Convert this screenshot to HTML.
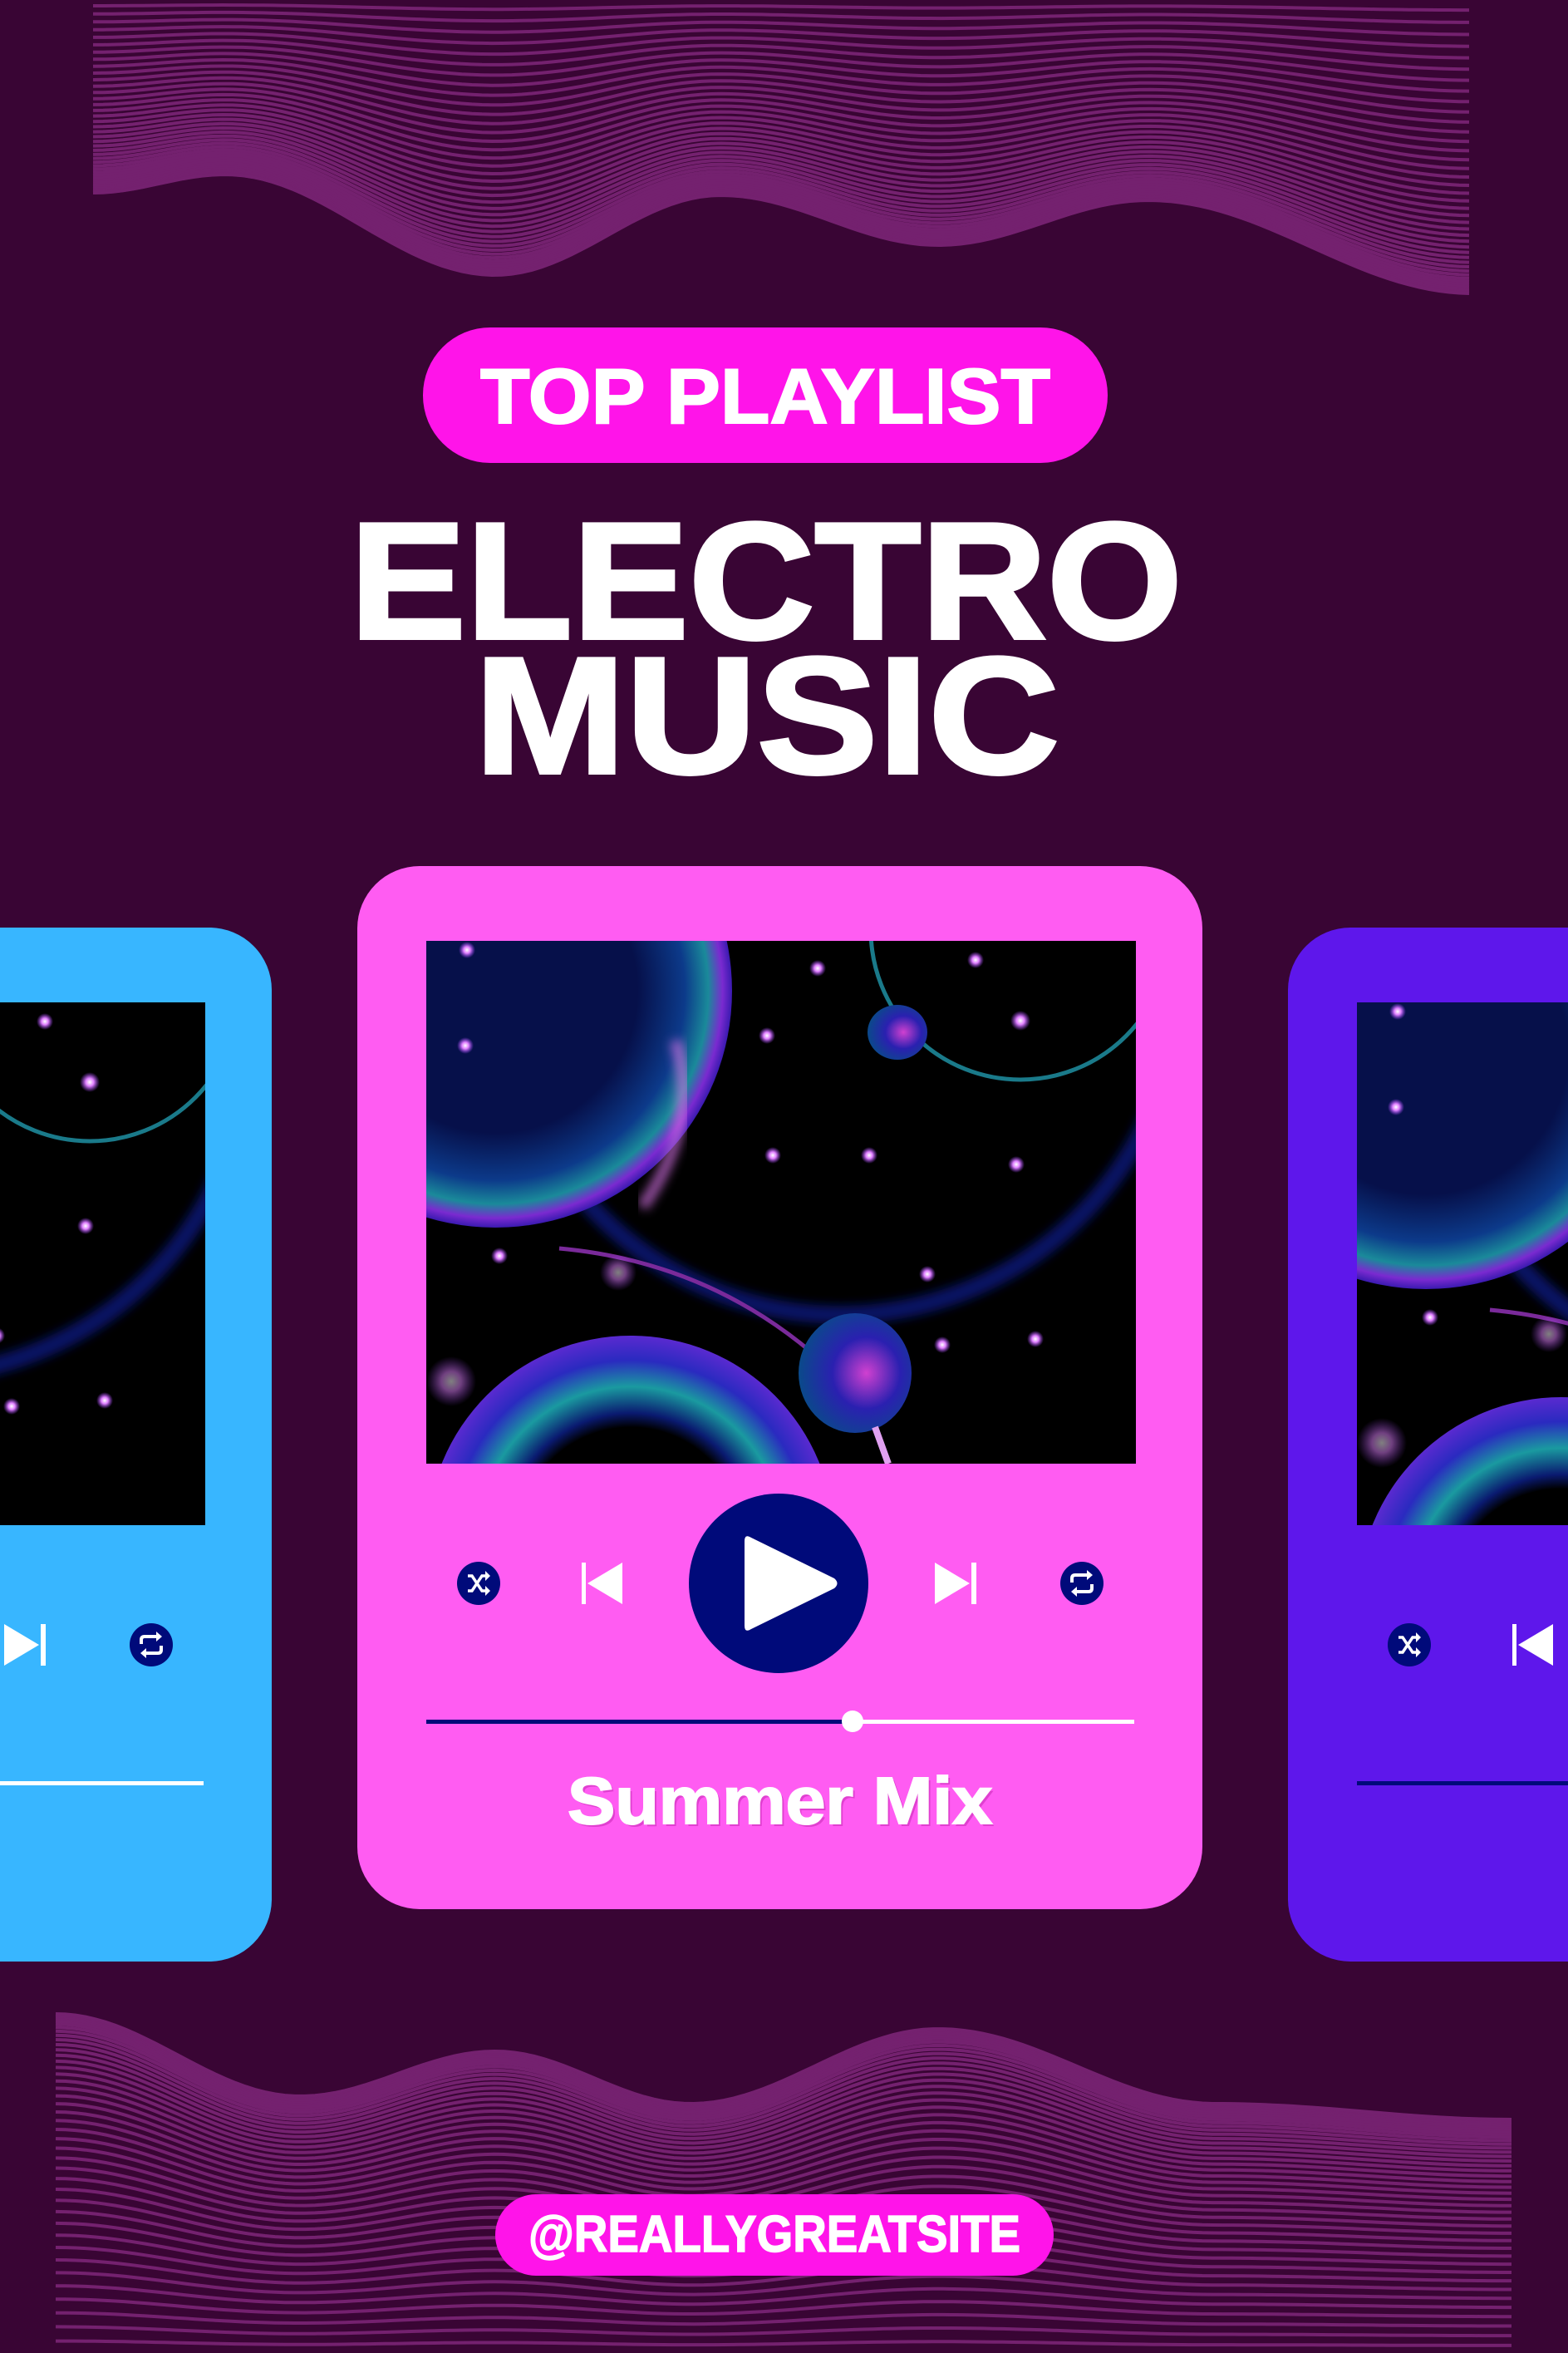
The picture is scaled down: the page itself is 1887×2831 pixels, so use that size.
<!DOCTYPE html>
<html style="overflow:hidden"><head><meta charset="utf-8">
<style>
html,body{margin:0;padding:0}
body{width:1887px;height:2831px;background:#390534;position:relative;overflow:hidden;font-family:"Liberation Sans",sans-serif}
#frame{position:absolute;left:0;top:0;width:1887px;height:2831px;overflow:hidden}
.abs{position:absolute}
.card{position:absolute;width:1017px;border-radius:75px;overflow:hidden}
.art{position:absolute;left:83px;top:90px;width:854px;height:629px;overflow:hidden;background:#000}
.ic{position:absolute}
</style></head><body>
<div id="frame">
<svg id="waves" class="abs" style="left:0;top:0" width="1887" height="2831" viewBox="0 0 1887 2831"></svg>

<svg class="abs" style="left:0;top:0" width="1887" height="1000">
  <rect x="509" y="394" width="824" height="163" rx="81" fill="#ff14e9"/>
  <text x="578" y="509" textLength="686" lengthAdjust="spacingAndGlyphs" font-family="Liberation Sans" font-weight="bold" font-size="94" fill="#fff" stroke="#fff" stroke-width="2">TOP PLAYLIST</text>
  <text x="421" y="768" textLength="1002" lengthAdjust="spacingAndGlyphs" font-family="Liberation Sans" font-weight="bold" font-size="200" fill="#fff" stroke="#fff" stroke-width="4">ELECTRO</text>
  <text x="571" y="930" textLength="704" lengthAdjust="spacingAndGlyphs" font-family="Liberation Sans" font-weight="bold" font-size="200" fill="#fff" stroke="#fff" stroke-width="4">MUSIC</text>
</svg>

<div id="cards"></div>

<svg class="abs" style="left:0;top:2600px" width="1887" height="200">
  <rect x="596" y="40" width="672" height="98" rx="49" fill="#ff14e9"/>
  <text x="636" y="109" textLength="592" lengthAdjust="spacingAndGlyphs" font-family="Liberation Sans" font-weight="bold" font-size="62" fill="#fff" stroke="#fff" stroke-width="1.5">@REALLYGREATSITE</text>
</svg>
</div>

<script>
const art = `
<svg width="854" height="629" viewBox="0 0 854 629">
<defs>
 <radialGradient id="bub" cx="0.5" cy="0.5" r="0.5">
  <stop offset="0.6" stop-color="#06104a"/><stop offset="0.8" stop-color="#0c3a8a"/><stop offset="0.9" stop-color="#1a8a9a"/><stop offset="0.96" stop-color="#7a2ad0"/><stop offset="1" stop-color="#3a1ab0"/>
 </radialGradient>
 <radialGradient id="tor" cx="0.5" cy="0.5" r="0.5">
  <stop offset="0.55" stop-color="#000"/><stop offset="0.62" stop-color="#0a1a70"/><stop offset="0.75" stop-color="#1a9aa0"/><stop offset="0.88" stop-color="#2a2ac0"/><stop offset="1" stop-color="#5a2ad0"/>
 </radialGradient>
 <radialGradient id="sph" cx="0.6" cy="0.5" r="0.6">
  <stop offset="0" stop-color="#d040d0"/><stop offset="0.5" stop-color="#2a20b0"/><stop offset="1" stop-color="#0a4a8a"/>
 </radialGradient>
 <radialGradient id="dot"><stop offset="0" stop-color="#fff"/><stop offset="0.4" stop-color="#e080ff"/><stop offset="1" stop-color="#a040ff" stop-opacity="0"/></radialGradient>
 <filter id="bl"><feGaussianBlur stdDeviation="6"/></filter>
</defs>
<rect width="854" height="629" fill="#000"/>
<circle cx="498" cy="40" r="410" fill="none" stroke="#0a1a90" stroke-width="22" opacity="0.7" filter="url(#bl)"/>
<circle cx="715" cy="-13" r="180" fill="none" stroke="#1a7a8a" stroke-width="5"/>
<circle cx="83" cy="60" r="285" fill="url(#bub)"/>
<path d="M300 120 Q330 220 260 320" stroke="#d070e0" stroke-width="14" fill="none" opacity="0.7" filter="url(#bl)"/>
<circle cx="246" cy="720" r="245" fill="url(#tor)"/>
<circle cx="246" cy="720" r="135" fill="#000"/>
<path d="M160 370 Q380 390 530 560" stroke="#7a2a9a" stroke-width="5" fill="none"/>
<ellipse cx="516" cy="520" rx="68" ry="72" fill="url(#sph)"/>
<ellipse cx="567" cy="110" rx="36" ry="33" fill="url(#sph)"/>
<path d="M540 585 L556 629" stroke="#e0a0f0" stroke-width="8"/>
<g fill="url(#dot)">
<circle cx="49" cy="11" r="10"/><circle cx="471" cy="33" r="10"/><circle cx="661" cy="23" r="10"/><circle cx="715" cy="96" r="12"/>
<circle cx="47" cy="126" r="10"/><circle cx="410" cy="114" r="10"/><circle cx="417" cy="258" r="10"/><circle cx="533" cy="258" r="10"/>
<circle cx="710" cy="269" r="10"/><circle cx="88" cy="379" r="10"/><circle cx="603" cy="401" r="10"/><circle cx="621" cy="486" r="10"/>
<circle cx="733" cy="479" r="10"/><circle cx="231" cy="399" r="22" opacity="0.5"/><circle cx="30" cy="530" r="30" opacity="0.5"/>
</g>
</svg>`;
function card(left, top, h, color, showText){
  return `<div class="card" style="left:${left}px;top:${top}px;height:${h}px;background:${color}">
   <div class="art">${art}</div>
   <svg class="ic" style="left:0;top:700px" width="1017" height="500" viewBox="0 700 1017 500">
    <circle cx="146" cy="863" r="26" fill="#000a7a"/>
    <path d="M133 854 h5 l12 18 h6 M133 872 h5 l12 -18 h6" stroke="#fff" stroke-width="3.5" fill="none"/>
    <path d="M154 848 l6 6 -6 6 z M154 866 l6 6 -6 6 z" fill="#fff"/>
    <rect x="270" y="838" width="5" height="50" fill="#fff"/><path d="M277 863 L319 838 V888 Z" fill="#fff"/>
    <circle cx="507" cy="863" r="108" fill="#000a7a"/>
    <path d="M466 812 Q466 803 474 808 L574 857 Q581 863 574 869 L474 918 Q466 923 466 914 Z" fill="#fff"/>
    <path d="M695 838 L737 863 L695 888 Z" fill="#fff"/><rect x="739" y="838" width="6" height="50" fill="#fff"/>
    <circle cx="872" cy="863" r="26" fill="#000a7a"/>
    <path d="M860 862 v-5 q0 -4 4 -4 h16 M884 864 v5 q0 4 -4 4 h-16" stroke="#fff" stroke-width="4" fill="none"/>
    <path d="M878 847 l7 6 -7 6 z M866 867 l-7 6 7 6 z" fill="#fff"/>
    <rect x="83" y="1027" width="513" height="5" fill="#000a7a"/>
    <rect x="596" y="1027" width="339" height="5" fill="#fff"/>
    <circle cx="596" cy="1029" r="13" fill="#fff"/>
    ${showText?`<text x="256" y="1155" textLength="511" lengthAdjust="spacingAndGlyphs" font-family="Liberation Sans" font-weight="bold" font-size="80" fill="#e040d0">Summer Mix</text>
    <text x="253" y="1152" textLength="511" lengthAdjust="spacingAndGlyphs" font-family="Liberation Sans" font-weight="bold" font-size="80" fill="#fff" stroke="#fff" stroke-width="2">Summer Mix</text>`:''}
   </svg></div>`;
}
document.getElementById('cards').innerHTML =
  card(-690,1116,1244,'#38b6ff',false)+card(1550,1116,1244,'#5e17eb',false)+card(430,1042,1255,'#ff5cf2',true);

function interp(pts,x){
  if(x<=pts[0][0])return pts[0][1];
  for(let i=0;i<pts.length-1;i++){const a=pts[i],b=pts[i+1];
    if(x<=b[0]){const t=(x-a[0])/(b[0]-a[0]);const s=(1-Math.cos(Math.PI*t))/2;return a[1]+(b[1]-a[1])*s;}}
  return pts[pts.length-1][1];
}
const topE=[[112,235],[271,213],[596,334],[867,238],[1129,298],[1382,244],[1773,356]];
const botE=[[67,2420],[361,2519],[596,2465],[831,2528],[1129,2438],[1463,2528],[1820,2547]];
let out='';
const N=42;
for(let i=1;i<=N;i++){
  const t=i/N, f=1-Math.pow(1-t,1.8);
  let d='';
  for(let x=112;x<=1773;x+=12){const y=interp(topE,x)*f - 3;d+=(x==112?'M':'L')+x+' '+y.toFixed(1)+' ';}
  out+=`<path d="${d}" stroke="#74216f" stroke-width="4" fill="none"/>`;
  let d2='';
  for(let x=67;x<=1820;x+=12){const e=interp(botE,x);const y=2831-(2831-e)*f + 3;d2+=(x==67?'M':'L')+x+' '+y.toFixed(1)+' ';}
  out+=`<path d="${d2}" stroke="#74216f" stroke-width="4" fill="none"/>`;
}
document.getElementById('waves').innerHTML=out;
</script>
</body></html>
